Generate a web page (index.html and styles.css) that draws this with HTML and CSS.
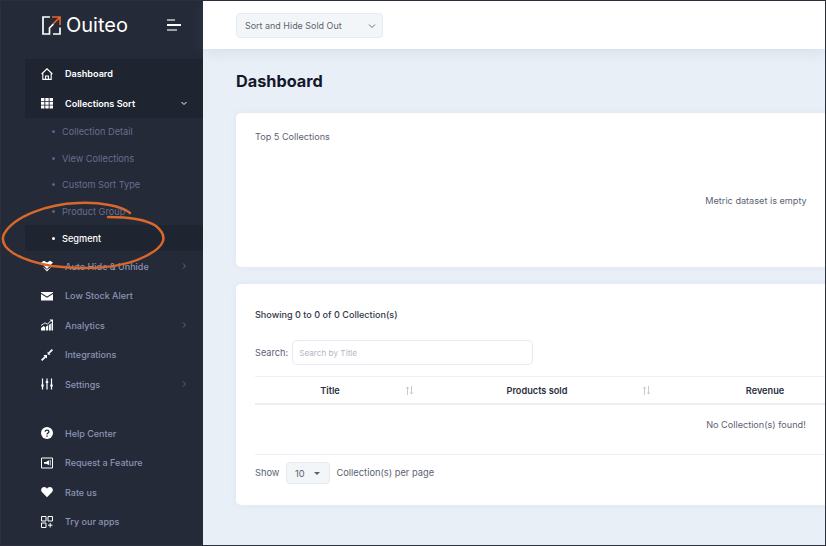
FILE: index.html
```html
<!DOCTYPE html>
<html lang="en">

<head>
    <meta charset="UTF-8">
    <meta name="viewport" content="width=device-width, initial-scale=1.0">
    <title>Ouiteo</title>
    <link rel="stylesheet" href="styles.css">
</head>

<body>
    <div class="app">
        <aside class="sidebar">
            <div class="brand">
                <div class="logo">
                    <svg width="19" height="19" viewBox="0 0 19 19" fill="none" stroke-width="1.700">
                        <path d="M8 1H1v17h6.500v-6L11.500 8M11 18h7v-6.500" stroke="#fff"/>
                        <path d="M10 1h8v8M17.500 1.500 11 8" stroke="#e8622a"/>
                    </svg>
                    <span>Ouiteo</span>
                </div>
                <div class="burger"><i></i><i></i><i></i></div>
            </div>

            <nav class="nav">
                <div class="group-open">
                    <a class="item active">
                        <svg class="icon" viewBox="0 0 12 12" fill="none" stroke="#fff" stroke-width="1.100"><path d="M.6 6 6 .8 11.400 6M1.800 5v6.400h8.400V5M4.600 11.400V8h2.800v3.400"/></svg>
                        <span>Dashboard</span>
                    </a>
                    <a class="item active">
                        <svg class="icon" viewBox="0 0 12 12" fill="#fff"><path d="M0 1h3.400v3H0zM4.300 1h3.400v3H4.300zM8.600 1H12v3H8.600zM0 4.800h3.400v3H0zM4.300 4.800h3.400v3H4.300zM8.600 4.800H12v3H8.600zM0 8.600h3.400v3H0zM4.300 8.600h3.400v3H4.300zM8.600 8.600H12v3H8.600z"/></svg>
                        <span>Collections Sort</span>
                        <svg class="caret" viewBox="0 0 8 8" fill="none" stroke="#fff" stroke-width="1"><path d="M1.500 3 4 5.500 6.500 3"/></svg>
                    </a>
                </div>
                <a class="sub">Collection Detail</a>
                <a class="sub">View Collections</a>
                <a class="sub">Custom Sort Type</a>
                <a class="sub">Product Group</a>
                <a class="sub current">Segment</a>
                <a class="item">
                    <svg class="icon" viewBox="0 0 12 12" fill="#fff"><path d="M0 2.500 3 .8 6 2.500 9 .8l3 1.700L6 9zM1.500 6.500 6 11.500l4.500-5L6 9.800z"/></svg>
                    <span>Auto Hide &amp; Unhide</span>
                    <svg class="caret" viewBox="0 0 8 8" fill="none" stroke="#5d6580" stroke-width="1"><path d="M3 1.500 5.500 4 3 6.500"/></svg>
                </a>
                <a class="item">
                    <svg class="icon" viewBox="0 0 12 12" fill="#fff"><path d="M0 2h12v.8L6 6.600 0 2.800zM0 4l6 3.800L12 4v6.500H0z"/></svg>
                    <span>Low Stock Alert</span>
                </a>
                <a class="item">
                    <svg class="icon" viewBox="0 0 12 12" fill="#fff"><path d="M0 9l2.500-2 1.500 1v3.500H0zM4.800 7.800l2.200-1.500v5.200H4.800zM7.800 6l2-1.500v7h-2zM10.500 4l1.500-1v8.500h-1.500z"/><path d="M0 6.500 4 3.800l2.500 1.400L10 1.500" fill="none" stroke="#fff" stroke-width=".9"/><path d="M8.500.5H12V4z"/></svg>
                    <span>Analytics</span>
                    <svg class="caret" viewBox="0 0 8 8" fill="none" stroke="#5d6580" stroke-width="1"><path d="M3 1.500 5.500 4 3 6.500"/></svg>
                </a>
                <a class="item">
                    <svg class="icon" viewBox="0 0 12 12" fill="#fff"><path d="M0 10.800 3.600 7.200 2.400 6 6 6l0 3.600-1.200-1.200L1.200 12zM12 1.200 8.400 4.800 9.600 6 6.600 5.400 6.600 2.400 7.200 3.600 10.800 0z"/></svg>
                    <span>Integrations</span>
                </a>
                <a class="item">
                    <svg class="icon" viewBox="0 0 12 12" fill="none" stroke="#fff" stroke-width="1.200"><path d="M1.500.500v11M6 .500v11M10.500.500v11"/><path d="M.3 7.500h2.400M4.800 4h2.400M9.300 7.500h2.400" stroke-width="2"/></svg>
                    <span>Settings</span>
                    <svg class="caret" viewBox="0 0 8 8" fill="none" stroke="#5d6580" stroke-width="1"><path d="M3 1.500 5.500 4 3 6.500"/></svg>
                </a>
            </nav>

            <nav class="nav-bottom">
                <a class="item">
                    <svg class="icon" viewBox="0 0 12 12"><circle cx="6" cy="6" r="6" fill="#fff"/><path d="M4.200 4.700C4.200 2.600 7.900 2.700 7.900 4.700 7.900 6 6 6 6 7.400" fill="none" stroke="#242a38" stroke-width="1.300"/><path d="M5.300 8.400h1.400v1.400H5.300z" fill="#242a38"/></svg>
                    <span>Help Center</span>
                </a>
                <a class="item">
                    <svg class="icon" viewBox="0 0 12 12" fill="#fff"><path d="M.5 1h11v10H.5z" fill="none" stroke="#fff"/><path d="M3 5h2l3-1.800V8L5 6.800H3zM8.800 3H9.600V8.500H8.800z"/></svg>
                    <span>Request a Feature</span>
                </a>
                <a class="item">
                    <svg class="icon" viewBox="0 0 12 12" fill="#fff"><path d="M6 11.200.9 6C-1 3.500 1 1 3.200 1 4.500 1 5.500 1.800 6 2.700 6.500 1.800 7.500 1 8.800 1 11 1 13 3.500 11.100 6z"/></svg>
                    <span>Rate us</span>
                </a>
                <a class="item">
                    <svg class="icon" viewBox="0 0 12 12" fill="none" stroke="#fff" stroke-width="1"><path d="M.5.500h4.500V5H.500zM7 .5h4.500V5H7zM.5 7H5v4.500H.5zM9.200 7v4.500M7 9.200h4.500"/></svg>
                    <span>Try our apps</span>
                </a>
            </nav>
        </aside>

        <div class="main">
            <header class="topbar">
                <div class="store-select">
                    <span>Sort and Hide Sold Out</span>
                    <svg width="8" height="8" viewBox="0 0 8 8" fill="none" stroke="#6c7280" stroke-width="1"><path d="M1 2.500 4 5.500 7 2.500"/></svg>
                </div>
            </header>

            <div class="content">
                <h1 class="page-title">Dashboard</h1>

                <section class="card chart-card">
                    <p class="card-title">Top 5 Collections</p>
                    <p class="empty-msg">Metric dataset is empty</p>
                </section>

                <section class="card list-card">
                    <p class="showing">Showing 0 to 0 of 0 Collection(s)</p>
                    <div class="search">
                        <label>Search:</label>
                        <input type="text" placeholder="Search by Title">
                    </div>
                    <div class="table">
                        <div class="thead">
                            <div class="th th-title">
                                <span>Title</span>
                                <svg class="sort" viewBox="0 0 9 9" fill="none" stroke="#b9bcc8" stroke-width=".8"><path d="M2.500 9V1M1 2.500 2.500 1 4 2.500M6.500 0v8M5 6.500 6.500 8 8 6.500"/></svg>
                            </div>
                            <div class="th th-sold">
                                <span>Products sold</span>
                                <svg class="sort" viewBox="0 0 9 9" fill="none" stroke="#b9bcc8" stroke-width=".8"><path d="M2.500 9V1M1 2.500 2.500 1 4 2.500M6.500 0v8M5 6.500 6.500 8 8 6.500"/></svg>
                            </div>
                            <div class="th th-rev"><span>Revenue</span></div>
                        </div>
                        <div class="empty-row">No Collection(s) found!</div>
                    </div>
                    <div class="per-page">
                        <span>Show</span>
                        <div class="per-select">10<i></i></div>
                        <span>Collection(s) per page</span>
                    </div>
                </section>
            </div>
        </div>

        <svg class="scribble" viewBox="0 0 210 280" width="210" height="280" fill="none">
            <path d="M130 213C122 206 100 202 78 203 48 204 14 216 4 234 -2 248 18 260 52 266 84 270 122 269 146 256 166 246 168 236 156 226 144 218 124 217 108 217" stroke="#d9682a" stroke-width="2.500" stroke-linecap="round"/>
        </svg>
    </div>
</body>

</html>
```

FILE: styles.css
```css
* {
    box-sizing: border-box;
    padding: 0;
    margin: 0;
    font-family: Inter, "Liberation Sans", sans-serif;
}

html, body {
    height: 100%;
    overflow: hidden;
}

.app {
    position: relative;
    display: flex;
    height: 546px;
    border: 1px solid #2c303c;
    overflow: hidden;
    background-color: #e9eff7;
}

/* sidebar */
.sidebar {
    flex: 0 0 202px;
    background-color: #242a38;
}

.brand {
    display: flex;
    align-items: center;
    justify-content: space-between;
    height: 48px;
    padding: 0 22px 0 41px;
}

.logo {
    display: flex;
    align-items: center;
    gap: 5px;
    color: #fff;
    font-size: 20px;
}

.burger {
    display: flex;
    flex-direction: column;
    gap: 3px;
    width: 14px;
}

.burger i {
    display: block;
    height: 2px;
    width: 8px;
    background-color: #9ca0aa;
}

.burger i:nth-child(2) {
    width: 14px;
    background-color: #fff;
}

.burger i:nth-child(3) {
    width: 10px;
}

.nav {
    margin-top: 10px;
    margin-left: 24px;
}

.nav-bottom {
    margin-top: 19.500px;
    margin-left: 24px;
}

.group-open {
    background-color: #1f2431;
}

.item {
    display: flex;
    align-items: center;
    gap: 12px;
    height: 29.500px;
    padding: 0 15px 0 16px;
    color: #8c94b3;
    font-size: 9px;
    font-weight: 500;
}

.item.active {
    color: #fff;
    font-size: 9.100px;
    font-weight: 600;
}

.icon {
    flex: 0 0 12px;
    width: 12px;
    height: 12px;
}

.caret {
    width: 8px;
    height: 8px;
    margin-left: auto;
}

.sub {
    display: flex;
    align-items: center;
    height: 26.700px;
    padding-left: 37px;
    color: #676f8e;
    font-size: 9.200px;
    position: relative;
}

.sub::before {
    content: "";
    position: absolute;
    left: 26.500px;
    top: 50%;
    width: 3px;
    height: 3px;
    margin-top: -1.500px;
    border-radius: 50%;
    background-color: #5b6484;
}

.sub.current {
    background-color: #1f2431;
    color: #fff;
    font-weight: 500;
}

.sub.current::before {
    background-color: #fff;
}

/* main */
.main {
    flex: 1;
    min-width: 0;
}

.topbar {
    height: 48px;
    padding: 12px 33px;
    background-color: #fff;
    box-shadow: 0 2px 14px rgba(120, 135, 165, 0.18);
}

.store-select {
    display: flex;
    align-items: center;
    justify-content: space-between;
    width: 147px;
    height: 25px;
    padding: 0 6px 0 8px;
    background-color: #f3f6f9;
    border: 1px solid #e6ebf2;
    border-radius: 4px;
    color: #5e6270;
    font-size: 8.950px;
}

.content {
    width: 1073px;
    padding: 20px 33px;
}

.page-title {
    height: 24px;
    line-height: 24px;
    margin-bottom: 20px;
    color: #14182a;
    font-size: 16.300px;
    font-weight: 700;
}

.card {
    width: 1040px;
    background-color: #fff;
    border-radius: 5px;
    padding: 0 19px;
    box-shadow: 0 0 6px rgba(160, 175, 200, 0.12);
}

.chart-card {
    height: 154px;
    margin-bottom: 17px;
    padding-top: 17px;
}

.card-title {
    line-height: 14px;
    color: #5c5f72;
    font-size: 9.150px;
}

.empty-msg {
    margin-top: 49.500px;
    line-height: 14px;
    text-align: center;
    color: #5c5f72;
    font-size: 9.150px;
}

.list-card {
    height: 221px;
    padding-top: 24px;
}

.showing {
    line-height: 14px;
    color: #33374a;
    font-size: 9.100px;
    font-weight: 500;
}

.search {
    display: flex;
    align-items: center;
    gap: 4px;
    margin-top: 18px;
    color: #5c5f72;
    font-size: 9.200px;
}

.search input {
    width: 241px;
    height: 25px;
    padding: 0 6px;
    border: 1px solid #e7e9f2;
    border-radius: 5px;
    font-size: 8.200px;
    outline: none;
}

.search input::placeholder {
    color: #b4b7c6;
}

.table {
    margin-top: 11px;
    border-top: 1px solid #eef0f5;
    border-bottom: 1px solid #eef0f5;
}

.thead {
    display: flex;
    height: 28px;
    border-bottom: 2px solid #eceef4;
}

.th {
    display: flex;
    align-items: center;
    color: #2b2f42;
    font-size: 9.200px;
    font-weight: 600;
}

.th span {
    flex: 1;
    text-align: center;
}

.sort {
    flex: 0 0 9px;
    width: 9px;
    height: 9px;
}

.th-title {
    width: 160px;
    padding-right: 1px;
}

.th-sold {
    width: 238px;
    padding-right: 2px;
}

.th-sold span {
    padding-left: 17px;
}

.th-rev {
    width: 224px;
}

.empty-row {
    height: 49px;
    padding-top: 12.500px;
    line-height: 14px;
    text-align: center;
    color: #5c5f72;
    font-size: 9.150px;
}

.per-page {
    display: flex;
    align-items: center;
    gap: 6.500px;
    margin-top: 7px;
    color: #5c5f72;
    font-size: 9.300px;
}

.per-page span {
    margin-top: -1px;
}

.per-select {
    display: flex;
    align-items: center;
    justify-content: space-between;
    width: 44px;
    height: 22px;
    padding: 0 9px 0 8px;
    background-color: #f3f6f9;
    border: 1px solid #e6ebf2;
    border-radius: 4px;
}

.per-select i {
    display: block;
    border-left: 3px solid transparent;
    border-right: 3px solid transparent;
    border-top: 3px solid #5c5f72;
}

/* hand drawn mark over the sidebar */
.scribble {
    position: absolute;
    left: -1px;
    top: -1px;
    pointer-events: none;
}
```
